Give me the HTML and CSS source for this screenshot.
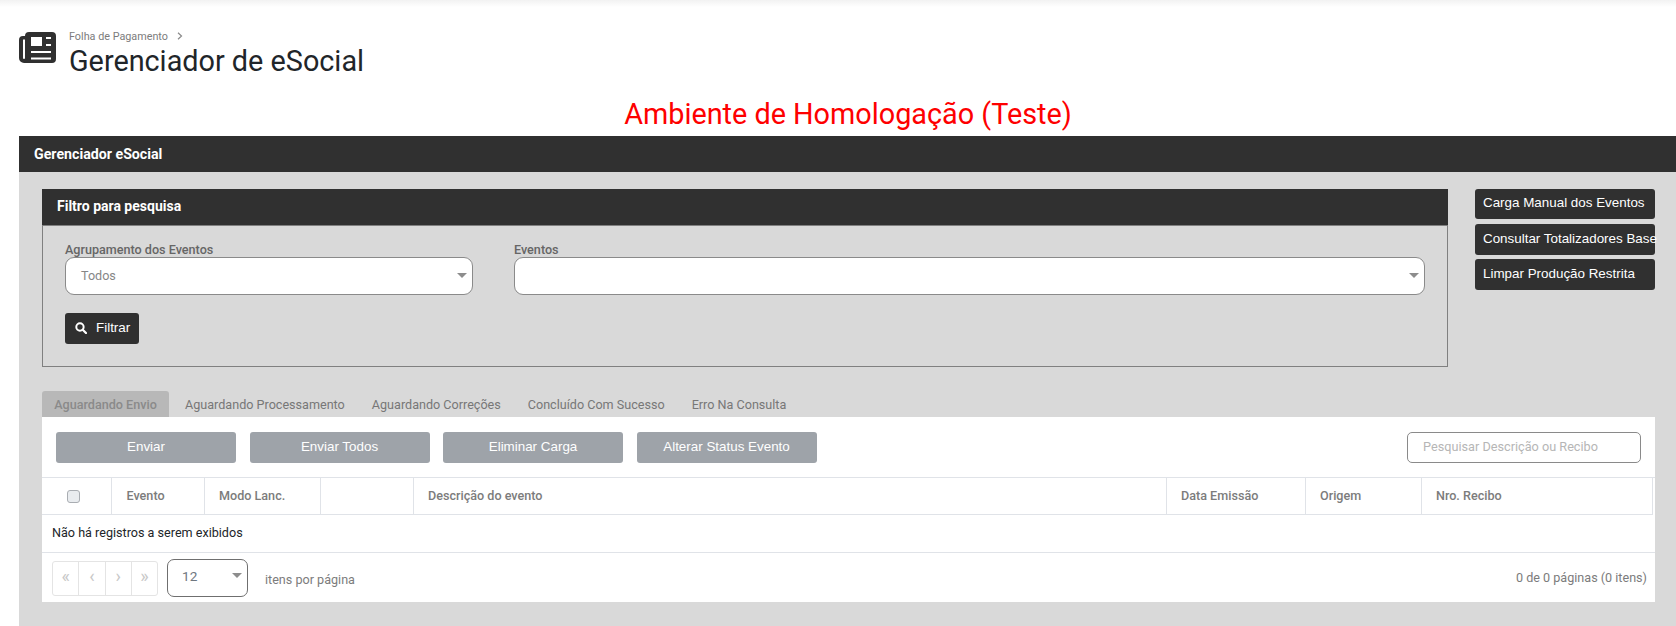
FILE: index.html
```html
<!DOCTYPE html>
<html lang="pt-BR">
<head>
<meta charset="utf-8">
<title>Gerenciador de eSocial</title>
<link rel="stylesheet" href="styles.css">
</head>
<body>
<div class="topshade"></div>
<header class="pagehead">
  <svg class="headicon" viewBox="0 0 37 32" width="37" height="32" aria-hidden="true">
    <path fill="#303030" d="M10 0H33a4 4 0 0 1 4 4V27a4 4 0 0 1-4 4H5a5 5 0 0 1-5-5V8a4 4 0 0 1 4-4H6a4 4 0 0 1 4-4Z"/>
    <path fill="#fff" d="M4 7.500H6V26a1 1 0 0 1-2 0Z"/>
    <path fill="#fff" d="M12 5h11v9H12ZM27 5h5v2h-5ZM27 12h5v2h-5ZM12 19h20v2H12ZM12 25.500h20v2H12Z"/>
  </svg>
  <div class="headtext">
    <div class="crumb">Folha de Pagamento<svg class="crumbsep" viewBox="0 0 6 8" width="6" height="8" aria-hidden="true"><path d="M1 .8 4.500 4 1 7.200" fill="none" stroke="#8a8a8a" stroke-width="1.200"/></svg></div>
    <h1 class="title">Gerenciador de eSocial</h1>
  </div>
</header>
<div class="envnote">Ambiente de Homologação (Teste)</div>
<main class="card">
  <div class="cardbar">Gerenciador eSocial</div>
  <div class="cardbody">
    <div class="toprow">
      <section class="filter">
        <div class="filterbar">Filtro para pesquisa</div>
        <div class="filterbody">
          <div class="fields">
            <div class="field field-a">
              <label class="fieldlabel">Agrupamento dos Eventos</label>
              <div class="select"><span>Todos</span><i class="caret"></i></div>
            </div>
            <div class="field field-b">
              <label class="fieldlabel">Eventos</label>
              <div class="select"><span></span><i class="caret"></i></div>
            </div>
          </div>
          <button class="darkbtn filterbtn">
            <svg viewBox="0 0 14 14" width="12" height="12" aria-hidden="true"><circle cx="5.800" cy="5.800" r="4.300" fill="none" stroke="#fff" stroke-width="2.300"/><path d="M9 9l3.800 3.800" stroke="#fff" stroke-width="2.600" stroke-linecap="round"/></svg>
            Filtrar
          </button>
        </div>
      </section>
      <aside class="actions">
        <button class="darkbtn action">Carga Manual dos Eventos</button>
        <button class="darkbtn action">Consultar Totalizadores Base</button>
        <button class="darkbtn action">Limpar Produção Restrita</button>
      </aside>
    </div>
    <nav class="tabs">
      <span class="tab active">Aguardando Envio</span>
      <span class="tab t2">Aguardando Processamento</span>
      <span class="tab t3">Aguardando Correções</span>
      <span class="tab t4">Concluído Com Sucesso</span>
      <span class="tab t5">Erro Na Consulta</span>
    </nav>
    <section class="gridpanel">
      <div class="toolbar">
        <button class="graybtn">Enviar</button>
        <button class="graybtn">Enviar Todos</button>
        <button class="graybtn">Eliminar Carga</button>
        <button class="graybtn">Alterar Status Evento</button>
        <div class="search">Pesquisar Descrição ou Recibo</div>
      </div>
      <div class="thead">
        <div class="th th-check"><span class="check"></span></div>
        <div class="th th-event">Evento</div>
        <div class="th">Modo Lanc.</div>
        <div class="th"></div>
        <div class="th">Descrição do evento</div>
        <div class="th">Data Emissão</div>
        <div class="th">Origem</div>
        <div class="th">Nro. Recibo</div>
      </div>
      <div class="empty">Não há registros a serem exibidos</div>
      <div class="pager">
        <div class="pagebtns">
          <span class="pagebtn">«</span><span class="pagebtn">‹</span><span class="pagebtn">›</span><span class="pagebtn">»</span>
        </div>
        <div class="pagesize"><span>12</span><i class="caret"></i></div>
        <span class="perpage">itens por página</span>
        <span class="pageinfo">0 de 0 páginas (0 itens)</span>
      </div>
    </section>
  </div>
</main>
</body>
</html>
```

FILE: styles.css
```css
* { box-sizing: border-box; }
html, body { margin: 0; padding: 0; }
body {
  width: 1676px;
  height: 626px;
  overflow: hidden;
  background: #fff;
  font-family: Roboto, "Liberation Sans", sans-serif;
  position: relative;
}
.topshade {
  position: absolute;
  left: 0; top: 0; right: 0;
  height: 7px;
  background: linear-gradient(#f2f2f2, #fff);
}
.pagehead {
  display: flex;
  align-items: flex-start;
  padding: 30px 0 0 19px;
  height: 96px;
}
.headicon { margin-top: 2px; flex: none; }
.headtext { margin-left: 13px; }
.crumb { font-size: 10.800px; line-height: 13px; color: #7c7c7c; }
.crumbsep { margin-left: 9px; }
.title {
  margin: 2px 0 0;
  font-size: 28.800px;
  line-height: 32px;
  font-weight: 400;
  color: #212529;
}
.envnote {
  height: 40px;
  text-align: center;
  padding-left: 20px;
  font-size: 28.800px;
  line-height: 36px;
  color: #fe0000;
}
.card { margin-left: 19px; height: 490px; background: #d9d9d9; }
.cardbar {
  height: 36px;
  background: #303030;
  color: #fff;
  font-weight: 700;
  font-size: 14.200px;
  line-height: 36px;
  padding-left: 15px;
}
.cardbody { padding: 17px 21px 0 23px; }
.toprow { display: flex; align-items: flex-start; }
.filter { width: 1406px; height: 178px; border: 1px solid #808080; border-top: 0; flex: none; }
.filterbar {
  height: 37px;
  margin: 0 -1px;
  background: #303030;
  border-bottom: 1px solid #808080;
  color: #fff;
  font-weight: 700;
  font-size: 14px;
  line-height: 34px;
  padding-left: 15px;
}
.filterbody { padding: 16px 22px 0; }
.fields { display: flex; gap: 41px; }
.field-a { width: 408px; }
.field-b { width: 911px; }
.fieldlabel {
  display: block;
  font-size: 12.600px;
  line-height: 15px;
  font-weight: 500;
  color: #666;
}
.select {
  display: flex;
  align-items: center;
  justify-content: space-between;
  height: 38px;
  background: #fff;
  border: 1px solid #8a8a8a;
  border-radius: 9px;
  padding: 0 5px 2px 15px;
  font-size: 12.600px;
  color: #868686;
}
.caret {
  display: block;
  width: 0; height: 0;
  border-left: 5.500px solid transparent;
  border-right: 5.500px solid transparent;
  border-top: 5px solid #8d8d8d;
}
button { font-family: "Liberation Sans", Arial, sans-serif; }
.darkbtn {
  background: #303030;
  color: #fff;
  border: 0;
  border-radius: 3px;
  font-size: 13.400px;
  padding: 0;
}
.filterbtn {
  display: flex;
  align-items: center;
  gap: 9px;
  width: 74px;
  height: 31px;
  margin-top: 18px;
  padding: 0 0 2px 10px;
}
.actions { margin-left: 27px; width: 180px; display: flex; flex-direction: column; gap: 4px; }
.action {
  height: 31px;
  width: 180px;
  text-align: left;
  padding: 0 0 3px 8px;
  white-space: nowrap;
  overflow: visible;
}
.action:first-child { height: 30px; }
.action:nth-child(2) { margin-top: 1px; }
.tabs { display: flex; align-items: stretch; height: 26px; margin-top: 24px; }
.tab {
  font-size: 12.600px;
  line-height: 28px;
  color: #777;
  white-space: nowrap;
}
.tab.active {
  width: 127px;
  text-align: center;
  background: #b8b8b8;
  color: #8a8a8a;
  font-weight: 500;
  border-radius: 3px 3px 0 0;
}
.t2 { margin-left: 16px; }
.t3 { margin-left: 27px; }
.t4 { margin-left: 27px; }
.t5 { margin-left: 27px; }
.gridpanel { width: 1613px; height: 185px; background: #fff; }
.toolbar {
  display: flex;
  gap: 13.500px;
  height: 61px;
  padding: 15px 14px 0;
  border-bottom: 1px solid #e0e3e8;
}
.graybtn {
  width: 180px;
  height: 31px;
  background: #9ea3a9;
  color: #fff;
  border: 0;
  border-radius: 3px;
  font-size: 13.400px;
  padding: 0 0 3px;
}
.search {
  margin-left: auto;
  width: 234px;
  height: 31px;
  border: 1px solid #8a8a8a;
  border-radius: 5px;
  padding-left: 15px;
  font-size: 12.700px;
  line-height: 27px;
  color: #b6b6b6;
}
.thead {
  display: grid;
  grid-template-columns: 69.500px 93.500px 116px 93px 753px 139px 116px 231px;
  width: 1611px;
  height: 37px;
  border-bottom: 1px solid #e0e3e8;
}
.th {
  border-right: 1px solid #e0e3e8;
  font-size: 12.600px;
  font-weight: 500;
  line-height: 36px;
  color: #7c7c7c;
  padding-left: 14px;
}
.th-event { padding-left: 15px; }
.th-check { display: flex; align-items: center; padding-left: 25px; }
.check {
  width: 13px; height: 13px;
  background: #e9ecef;
  border: 1px solid #a9adb2;
  border-radius: 3px;
}
.empty {
  height: 38px;
  border-bottom: 1px solid #e0e3e8;
  padding-left: 10px;
  font-size: 12.600px;
  line-height: 35px;
  color: #212529;
}
.pager { display: flex; align-items: center; height: 49px; padding: 0 8px 0 10px; }
.pagebtns {
  display: flex;
  width: 106px;
  height: 35px;
  margin-top: 1px;
  border: 1px solid #e4e4e4;
  border-radius: 3px;
}
.pagebtn {
  flex: 1;
  text-align: center;
  font-size: 18px;
  line-height: 28px;
  color: #c8c8c8;
  border-right: 1px solid #e4e4e4;
}
.pagebtn:last-child { border-right: 0; }
.pagesize {
  display: flex;
  align-items: center;
  justify-content: space-between;
  width: 81px;
  height: 38px;
  margin-left: 9px;
  padding: 0 5px 4px 14px;
  border: 1px solid #6f6f6f;
  border-radius: 7px;
  font-size: 13.600px;
  color: #6f7780;
}
.perpage { margin-left: 17px; font-size: 12.600px; color: #7c7c7c; padding-top: 4px; }
.pageinfo { margin-left: auto; font-size: 12.600px; color: #7c7c7c; }
```
